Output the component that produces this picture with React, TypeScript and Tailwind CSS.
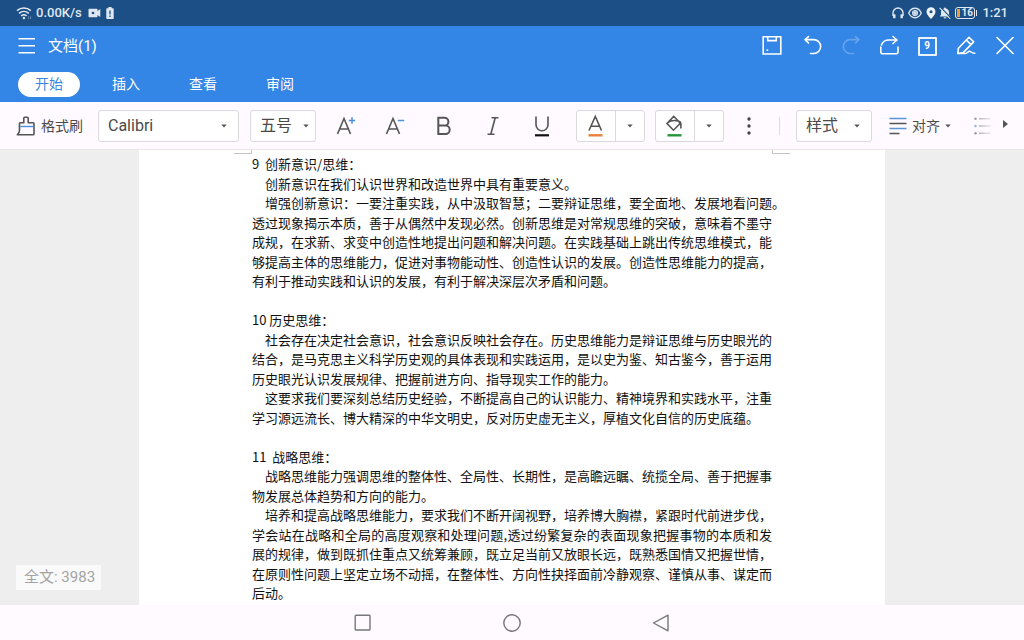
import React from "react";

const sections: { heading: string; paragraphs: string[][] }[] = [
  {
    heading: "9  创新意识/思维：",
    paragraphs: [
      ["创新意识在我们认识世界和改造世界中具有重要意义。"],
      [
        "增强创新意识：一要注重实践，从中汲取智慧；二要辩证思维，要全面地、发展地看问题。",
        "透过现象揭示本质，善于从偶然中发现必然。创新思维是对常规思维的突破，意味着不墨守",
        "成规，在求新、求变中创造性地提出问题和解决问题。在实践基础上跳出传统思维模式，能",
        "够提高主体的思维能力，促进对事物能动性、创造性认识的发展。创造性思维能力的提高，",
        "有利于推动实践和认识的发展，有利于解决深层次矛盾和问题。",
      ],
    ],
  },
  {
    heading: "10 历史思维：",
    paragraphs: [
      [
        "社会存在决定社会意识，社会意识反映社会存在。历史思维能力是辩证思维与历史眼光的",
        "结合，是马克思主义科学历史观的具体表现和实践运用，是以史为鉴、知古鉴今，善于运用",
        "历史眼光认识发展规律、把握前进方向、指导现实工作的能力。",
      ],
      [
        "这要求我们要深刻总结历史经验，不断提高自己的认识能力、精神境界和实践水平，注重",
        "学习源远流长、博大精深的中华文明史，反对历史虚无主义，厚植文化自信的历史底蕴。",
      ],
    ],
  },
  {
    heading: "11  战略思维：",
    paragraphs: [
      [
        "战略思维能力强调思维的整体性、全局性、长期性，是高瞻远瞩、统揽全局、善于把握事",
        "物发展总体趋势和方向的能力。",
      ],
      [
        "培养和提高战略思维能力，要求我们不断开阔视野，培养博大胸襟，紧跟时代前进步伐，",
        "学会站在战略和全局的高度观察和处理问题,透过纷繁复杂的表面现象把握事物的本质和发",
        "展的规律，做到既抓住重点又统筹兼顾，既立足当前又放眼长远，既熟悉国情又把握世情，",
        "在原则性问题上坚定立场不动摇，在整体性、方向性抉择面前冷静观察、谨慎从事、谋定而",
        "后动。",
      ],
    ],
  },
];

function Caret({ className = "" }: { className?: string }) {
  return (
    <svg className={className} width="6" height="4" viewBox="0 0 6 4" aria-hidden="true">
      <path d="M0.3 0.5h5.4L3 3.6z" fill="#555" />
    </svg>
  );
}

function Picker({ label, value, box, pad }: { label: string; value: string; box: string; pad: string }) {
  return (
    <div className={`relative h-8 shrink-0 ${box}`}>
      <select
        aria-label={label}
        defaultValue={value}
        className={`h-full w-full appearance-none rounded-[3px] border border-[#dcd9de] bg-white pl-[9px] font-[Roboto,'Noto_Sans_CJK_SC',sans-serif] text-base text-[#4a4a4a] ${pad}`}
      >
        <option>{value}</option>
      </select>
      <Caret className={`pointer-events-none absolute top-3.5 ${pad === "pr-8" ? "right-3" : "right-[7px]"}`} />
    </div>
  );
}

function HeaderButton({ label, children, disabled }: { label: string; children: React.ReactNode; disabled?: boolean }) {
  return (
    <button aria-label={label} disabled={disabled} className="flex size-6 items-center justify-center disabled:opacity-25">
      <svg width="24" height="22" viewBox="-1 0 24 22" fill="none" stroke="#fff" strokeWidth="1.6" strokeLinecap="round" strokeLinejoin="round">
        {children}
      </svg>
    </button>
  );
}

function FormatButton({ label, children }: { label: string; children: React.ReactNode }) {
  return (
    <button aria-label={label} className="flex h-8 w-[49px] shrink-0 items-center justify-center">
      <svg width="24" height="24" viewBox="0 0 24 24" fill="none" stroke="#555" strokeWidth="1.6">
        {children}
      </svg>
    </button>
  );
}

function SplitButton({ label, children }: { label: string; children: React.ReactNode }) {
  return (
    <div className="ml-2.5 flex h-8 w-[69px] shrink-0 rounded-[3px] border border-[#dcd9de] bg-white">
      <button aria-label={label} className="flex w-[39px] items-center justify-center border-r border-[#dcd9de]">
        <svg width="24" height="24" viewBox="0 0 24 24" fill="none" stroke="#555" strokeWidth="1.6">
          {children}
        </svg>
      </button>
      <button aria-label={`${label}选项`} className="flex flex-1 items-center justify-center">
        <Caret />
      </button>
    </div>
  );
}

function StatusBar() {
  return (
    <div className="flex h-[26px] items-center bg-[#1b4f86] pr-4 pl-4 text-[13px] font-medium text-[#dfe8f2]">
      <svg width="16" height="14" viewBox="0 0 16 14" fill="none" stroke="#dfe8f2" strokeWidth="1.5" aria-hidden="true">
        <path d="M1 4.6C5 1.1 10.8 1.1 14.8 4.6M3 7.4c2.9-2.5 6.9-2.5 9.8 0M5.2 9.9c1.6-1.4 3.8-1.4 5.4 0" />
        <circle cx="7.9" cy="12" r="1.2" fill="#dfe8f2" stroke="none" />
        <path d="M12.6 10.4v2.6M14.6 10.4v2.6" strokeWidth="1" opacity="0.4" />
      </svg>
      <span className="ml-1">0.00K/s</span>
      <svg className="ml-1.5" width="13" height="10" viewBox="0 0 13 10" aria-hidden="true">
        <path d="M1.3 0.8h7.4q.8 0 .8.8v1.5L12.3 1v8L9.5 6.9v1.5q0 .8-.8.8H1.3q-.8 0-.8-.8V1.6q0-.8.8-.8z" fill="#dfe8f2" />
        <circle cx="5" cy="5" r="1.3" fill="#1b4f86" />
      </svg>
      <svg className="ml-[5px]" width="8" height="12" viewBox="0 0 8 12" aria-hidden="true">
        <path d="M2.4 0h3.2v1.2H7q.7 0 .7.7v9.4q0 .7-.7.7H1q-.7 0-.7-.7V1.9q0-.7.7-.7h1.4z" fill="#dfe8f2" />
        <path d="M4 3.4v4M4 8.6V10" stroke="#1b4f86" strokeWidth="1.3" />
      </svg>
      <div className="ml-auto flex items-center">
        <svg width="12" height="12" viewBox="0 0 12 12" fill="none" stroke="#dfe8f2" strokeWidth="1.4" aria-hidden="true">
          <path d="M1 9V6a5 5 0 0 1 10 0v3" />
          <path d="M2.3 7.3v4M9.7 7.3v4" strokeWidth="2.4" />
        </svg>
        <svg className="ml-1" width="14" height="12" viewBox="0 0 14 12" fill="none" stroke="#dfe8f2" strokeWidth="1.3" aria-hidden="true">
          <path d="M.7 6C3.5-.3 10.5-.3 13.3 6 10.5 12.3 3.5 12.3.7 6z" />
          <circle cx="7" cy="6" r="2.4" />
          <circle cx="7" cy="6" r="1" fill="#dfe8f2" />
        </svg>
        <svg className="ml-1" width="10" height="12" viewBox="0 0 10 12" aria-hidden="true">
          <path d="M5 .3a4.5 4.5 0 0 1 4.5 4.5C9.5 7.8 5 11.9 5 11.9S.5 7.8.5 4.8A4.5 4.5 0 0 1 5 .3z" fill="#eef3f8" />
          <circle cx="5" cy="4.7" r="1.5" fill="#1b4f86" />
        </svg>
        <svg className="ml-[3px]" width="12" height="12" viewBox="0 0 12 12" aria-hidden="true">
          <path d="M6 .4a1 1 0 0 1 1 1c2 .5 3 2 3 4v2.3l1.3 1.900H.8L2 7.7V5.4c0-2 1-3.5 3-4a1 1 0 0 1 1-1zM4.600 10.200h2.800a1.400 1.400 0 0 1-2.800 0z" fill="#dfe8f2" />
          <path d="M1.600.2l10 10.600" stroke="#1b4f86" strokeWidth="1.2" />
          <path d="M.6.8l10.600 11" stroke="#dfe8f2" strokeWidth="1.1" />
        </svg>
        <div className="ml-1 flex h-3 w-5 items-center rounded-[3px] border border-[#dfe8f2] px-px text-[10px] leading-none font-bold">
          <span className="h-2 w-[3px] bg-[#f39a36]" />
          <span className="pl-px">16</span>
        </div>
        <span className="ml-px h-1.5 w-px bg-[#dfe8f2]" />
        <span className="ml-[5px]">1:21</span>
      </div>
    </div>
  );
}

function Header() {
  return (
    <header className="bg-[#3385e6] text-white">
      <div className="flex h-10 items-center pr-[7px] pl-[18px]">
        <button aria-label="菜单">
          <svg width="18" height="18" viewBox="0 0 18 18" stroke="#fff" strokeWidth="1.5">
            <path d="M.5 1.700h16.500M.5 8.700h16.500M.5 15.700h16.500" />
          </svg>
        </button>
        <h1 className="ml-3 text-[15px]">文档(1)</h1>
        <div className="ml-auto flex gap-[15px]">
          <HeaderButton label="保存">
            <path d="M3.200 1.800h17.600v17.200H3.200zM7.700 1.800v3.800h8.600V1.800" strokeLinejoin="miter" />
            <circle cx="7.200" cy="15.100" r=".6" fill="#fff" strokeWidth=".6" />
          </HeaderButton>
          <HeaderButton label="撤销">
            <path d="M9.500 1.600L6 4.600 9.500 8M6 4.600h8.700a6.900 6.900 0 0 1 0 13.900H11.500" />
          </HeaderButton>
          <HeaderButton label="重做" disabled>
            <path d="M17.500 1.600L21 4.600 17.500 8M21 4.600h-8.700a6.900 6.900 0 0 0 0 13.900h3.200" />
          </HeaderButton>
          <HeaderButton label="分享">
            <path d="M3.800 12v4.800q0 2 2 2h13.200q2 0 2-2V12M4.500 10C5.500 6.800 8.500 5 12 5h7.500M16 1.500L20 5l-4 3.500" />
          </HeaderButton>
          <button aria-label="窗口" className="flex size-6 items-center justify-center">
            <span className="flex size-[19px] items-center justify-center rounded-[1px] border-2 border-white/90 text-[10px] leading-none font-bold">9</span>
          </button>
          <HeaderButton label="编辑">
            <path d="M2.800 18.500l.6-5.300L14 2.300l4.700 4.600L8.200 17.600zM11.400 5.100l4.600 4.500M2.800 18.500h7.600c2 0 2.500-2.300 4.200-2.300s1.700 2.300 5.200 2" />
          </HeaderButton>
          <HeaderButton label="关闭">
            <path d="M3 2.500l16 16M19 2.500L3 18.500" />
          </HeaderButton>
        </div>
      </div>
      <nav className="flex h-9 items-center gap-[15px] pl-[18px] text-sm">
        <button className="h-[25px] w-[62px] rounded-full bg-white text-[#3d86dd]">开始</button>
        <button className="h-[25px] w-[62px]">插入</button>
        <button className="h-[25px] w-[62px]">查看</button>
        <button className="h-[25px] w-[62px]">审阅</button>
      </nav>
    </header>
  );
}

function Toolbar() {
  return (
    <div className="flex h-12 items-center overflow-hidden border-b border-[#ece6ec] bg-[#fefaff] pl-4 text-sm text-[#4a4a4a]">
      <button className="flex shrink-0 items-center gap-1.5">
        <svg width="19" height="20" viewBox="0 0 19 20" fill="none" stroke="#555" strokeWidth="1.6" strokeLinejoin="round" aria-hidden="true">
          <path d="M4 6.800h3.800V2.200q0-1 1-1h2.400q1 0 1 1v4.600H17q1 0 1 1V18q0 .8-.8.8H1.300q2.200-1.800 2.200-4.500V7.300z" />
          <path d="M4.300 10.500h13" stroke="#4a8fe0" strokeWidth="1.4" />
        </svg>
        格式刷
      </button>
      <div className="ml-[15px] flex shrink-0 gap-[11px]">
        <Picker label="字体" value="Calibri" box="w-[141px]" pad="pr-8" />
        <Picker label="字号" value="五号" box="w-[66px]" pad="pr-5" />
      </div>
      <div className="ml-[5px] flex shrink-0">
        <FormatButton label="增大字号">
          <path d="M3.500 20L10 4.500 16.500 20M5.500 15h9" />
          <path d="M14.800 6.500h6.400M18 3.300v6.400" stroke="#4a8fe0" strokeWidth="1.5" />
        </FormatButton>
        <FormatButton label="减小字号">
          <path d="M3.500 20L10 4.500 16.500 20M5.500 15h9" />
          <path d="M14.800 6.500h6.400" stroke="#4a8fe0" strokeWidth="1.5" />
        </FormatButton>
        <FormatButton label="加粗">
          <path d="M6.300 3.800h6.200a3.900 3.900 0 0 1 0 7.800H6.300zM6.300 11.600h7.200a4.200 4.200 0 0 1 0 8.400H6.300z" strokeWidth="2" />
        </FormatButton>
        <FormatButton label="倾斜">
          <path d="M10.500 3.700h7M6.500 20.200h7M14.200 3.700L9.800 20.200" />
        </FormatButton>
        <FormatButton label="下划线">
          <path d="M6 2.500v8.300a6 5.900 0 0 0 12 0V2.500" />
          <path d="M5 21.300h14" stroke="#111" strokeWidth="2.200" />
        </FormatButton>
      </div>
      <SplitButton label="字体颜色">
        <path d="M5 16.500L11.300 2.500l6.200 14M7 12.300h8.500" />
        <path d="M4.500 21.300h14" stroke="#e8833a" strokeWidth="2.400" />
      </SplitButton>
      <SplitButton label="填充颜色">
        <path d="M10.800 2.300L4 9.600l6.500 6.600L17.300 9.300zM4.600 8.700C7.500 6.500 12 6.200 15 7q2.900.7 2.900 3v4.500" />
        <path d="M4.500 21.300h14" stroke="#27963a" strokeWidth="2.400" />
      </SplitButton>
      <button aria-label="更多" className="ml-[13px] flex h-8 w-6 shrink-0 items-center justify-center">
        <svg width="4" height="18" viewBox="0 0 4 18" fill="#444">
          <circle cx="2" cy="2" r="1.700" />
          <circle cx="2" cy="9" r="1.700" />
          <circle cx="2" cy="16" r="1.700" />
        </svg>
      </button>
      <span className="ml-[18px] h-[18px] w-px shrink-0 bg-[#dedade]" />
      <div className="ml-4 shrink-0">
        <Picker label="样式" value="样式" box="w-[76px]" pad="pr-8" />
      </div>
      <button className="ml-[17px] flex shrink-0 items-center gap-[5px]">
        <svg width="18" height="18" viewBox="0 0 18 18" strokeWidth="1.7" aria-hidden="true">
          <path d="M.5 1.500h17M.5 11.500h17" stroke="#5a93d6" />
          <path d="M.5 6.500h17M.5 16.500h10" stroke="#555" />
        </svg>
        对齐
        <Caret />
      </button>
      <button aria-label="项目符号" className="ml-[23px] shrink-0">
        <svg width="18" height="18" viewBox="0 0 18 18">
          <defs>
            <linearGradient id="fade" x1="0" x2="18" y1="0" y2="0" gradientUnits="userSpaceOnUse">
              <stop offset="0.2" stopColor="#888" stopOpacity="0.65" />
              <stop offset="1" stopColor="#888" stopOpacity="0.1" />
            </linearGradient>
          </defs>
          <path d="M5 1h12v1.400H5zM5 8.300h12v1.400H5zM5 15.600h12V17H5z" fill="url(#fade)" />
          <circle cx="1.500" cy="1.700" r="1.200" fill="#999" />
          <circle cx="1.500" cy="9" r="1.200" fill="#8fb4e6" />
          <circle cx="1.500" cy="16.300" r="1.200" fill="#999" />
        </svg>
      </button>
      <button aria-label="向右滚动" className="mb-1 ml-[11px] shrink-0">
        <svg width="5" height="8" viewBox="0 0 5 8">
          <path d="M0 0l5 4-5 4z" fill="#555" />
        </svg>
      </button>
    </div>
  );
}

function DocumentPage() {
  return (
    <article className="w-full max-w-[746px] bg-white px-[113px] text-[13px] leading-normal text-[#111]">
      <div className="-mx-[18px] flex h-1 justify-between">
        <span className="w-[18px] border-r border-b border-[#c4c4c4]" />
        <span className="w-[18px] border-b border-l border-[#c4c4c4]" />
      </div>
      {sections.map((section, i) => (
        <section key={section.heading} className={i > 0 ? "mt-[1.5em]" : ""}>
          <h2 className="whitespace-pre">{section.heading}</h2>
          {section.paragraphs.map((lines) => (
            <p key={lines[0]}>
              {lines.map((line, n) => (
                <span
                  key={line}
                  className={`block whitespace-nowrap ${n === 0 ? "pl-[13px]" : ""} ${n < lines.length - 1 ? "text-justify [text-align-last:justify]" : ""}`}
                >
                  {line}
                </span>
              ))}
            </p>
          ))}
        </section>
      ))}
    </article>
  );
}

export default function App() {
  return (
    <div className="flex min-h-screen flex-col bg-[#fefaff] font-[Roboto,'Noto_Sans_CJK_SC',sans-serif]" lang="zh-CN">
      <StatusBar />
      <Header />
      <Toolbar />
      <main className="relative flex flex-1 justify-center bg-[#eee] font-['Noto_Sans_CJK_SC',sans-serif]">
        <DocumentPage />
        <div className="absolute bottom-[15px] left-4 bg-[#fafafa] pr-1.5 pl-2 font-[Roboto,'Noto_Sans_CJK_SC',sans-serif] text-[15px] leading-[25px] text-[#a3a3a3]">
          全文: 3983
        </div>
      </main>
      <nav className="flex h-[35px] items-center justify-center gap-[125px]">
        <button aria-label="最近任务" className="flex size-6 items-center justify-center">
          <svg width="18" height="18" viewBox="0 0 18 18" fill="none" stroke="#777" strokeWidth="1.4">
            <rect x="1.200" y="1.200" width="14.800" height="14.800" rx="0.800" />
          </svg>
        </button>
        <button aria-label="主屏幕" className="flex size-6 items-center justify-center">
          <svg width="18" height="18" viewBox="0 0 18 18" fill="none" stroke="#777" strokeWidth="1.4">
            <circle cx="9" cy="9" r="8.200" />
          </svg>
        </button>
        <button aria-label="返回" className="flex size-6 items-center justify-center">
          <svg width="18" height="18" viewBox="0 0 18 18" fill="none" stroke="#777" strokeWidth="1.4" strokeLinejoin="round">
            <path d="M16 1.200v15.600L1.500 9z" />
          </svg>
        </button>
      </nav>
    </div>
  );
}
